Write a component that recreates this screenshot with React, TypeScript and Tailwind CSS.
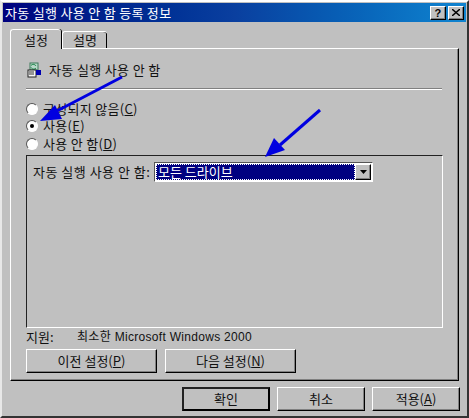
import type { ReactNode } from 'react'

const raised =
  'border border-t-white border-l-white border-r-black border-b-black shadow-[inset_-1px_-1px_0_#808080]'

function Accel({ children }: { children: ReactNode }) {
  return <span className="underline underline-offset-1">{children}</span>
}

function Radio({ checked, children }: { checked?: boolean; children: ReactNode }) {
  return (
    <div className="flex h-[17.5px] items-center gap-[5px]">
      <span className="flex h-[12px] w-[12px] items-center justify-center rounded-full border border-t-[#555] border-l-[#555] border-r-white border-b-white bg-white">
        {checked && <span className="h-[4px] w-[4px] rounded-full bg-black" />}
      </span>
      <span className="tracking-[0.3px]">{children}</span>
    </div>
  )
}

function PushButton({ width, children, strong }: { width: string; children: ReactNode; strong?: boolean }) {
  return (
    <button
      type="button"
      className={`flex h-[24px] items-center justify-center ${width} ${
        strong ? 'border-2 border-t-[#222] border-l-[#222] border-r-black border-b-black' : raised
      }`}
    >
      {children}
    </button>
  )
}

function PolicyIcon() {
  return (
    <svg width="16" height="16" viewBox="0 0 16 16" className="shrink-0">
      <rect x="4" y="1" width="8" height="7" fill="#b8d8c8" stroke="#3c7a5a" />
      <path d="M5 3.5c2-2 4-1 5 .5M10 6c-2 2-4 1-5-.5" fill="none" stroke="#0a7a3a" />
      <rect x="2" y="8" width="8" height="7" fill="#f4f4f4" stroke="#222" />
      <path d="M3 10h5M3 12h5" stroke="#333" />
      <rect x="10" y="8" width="5" height="5" fill="#0000b0" />
    </svg>
  )
}

export default function App() {
  return (
    <div className="relative flex h-[418px] w-[469px] flex-col overflow-hidden bg-[#c0c0c0] text-[13px] leading-[14px] text-[#111] [font-family:'Noto_Sans_CJK_KR','Liberation_Sans',sans-serif]">
      {/* window edge */}
      <div className="flex h-full flex-col border-2 border-t-white border-r-[#333] border-b-[#333] border-l-[#e8e8e8] p-[1px]">
        <div className="flex h-[19px] shrink-0 items-center justify-between bg-gradient-to-r from-[#00007e] via-[#0a3f9f] to-[#1084d0] pr-[2px] pl-[2px] tracking-[0.3px] text-white">
          <span>자동 실행 사용 안 함 등록 정보</span>
          <div className="flex gap-[2px]">
            <span className={`flex h-[14px] w-[16px] items-center justify-center bg-[#c0c0c0] text-[11px] font-bold text-black [font-family:'Liberation_Sans',sans-serif] ${raised}`}>
              ?
            </span>
            <span className={`flex h-[14px] w-[16px] items-center justify-center bg-[#c0c0c0] ${raised}`}>
              <svg width="8" height="7" viewBox="0 0 8 7">
                <path d="M0 0l8 7M8 0L0 7" stroke="#000" strokeWidth="1.4" />
              </svg>
            </span>
          </div>
        </div>

        {/* tabs */}
        <div className="ml-[7px] flex h-[26px] shrink-0 items-end">
          <div className="relative z-10 -mb-px flex h-[20px] w-[51px] items-center justify-center rounded-t-[3px] border-t border-l border-white bg-[#c0c0c0] shadow-[1px_0_0_#000]">
            설정
          </div>
          <div className="ml-[1px] flex h-[17px] w-[45px] items-center justify-center rounded-t-[3px] border-t border-l border-white shadow-[inset_-1px_0_0_#000]">
            설명
          </div>
        </div>

        {/* tab page */}
        <div className="ml-[7px] flex h-[333px] w-[449px] shrink-0 flex-col border border-t-white border-l-white border-r-black border-b-black px-[15px] shadow-[inset_-1px_-1px_0_#808080]">
          <div className="mt-[13px] flex items-center gap-[7px]">
            <PolicyIcon />
            <span className="tracking-[0.35px]">자동 실행 사용 안 함</span>
          </div>
          <div className="mt-[10px] h-[2px] w-[416px] shrink-0 border-t border-b border-t-[#808080] border-b-white" />

          <div className="mt-[10px] flex flex-col">
            <Radio>
              구성되지 않음(<Accel>C</Accel>)
            </Radio>
            <Radio checked>
              사용(<Accel>E</Accel>)
            </Radio>
            <Radio>
              사용 안 함(<Accel>D</Accel>)
            </Radio>
          </div>

          <div className="mt-[2.5px] flex h-[173px] w-[417px] shrink-0 items-start border border-t-[#222] border-l-[#222] border-r-white border-b-white pt-[6px] pl-[6px]">
            <span className="mt-[3px] w-[121px] tracking-[0.5px]">자동 실행 사용 안 함:</span>
            <div className="flex h-[20px] w-[219px] items-center border border-t-[#555] border-l-[#555] border-r-white border-b-white bg-white p-px">
              <span className="flex h-full flex-1 items-center bg-[#000080] pl-[2px] text-white outline-1 -outline-offset-1 outline-dotted outline-white">
                모든 드라이브
              </span>
              <span className={`flex h-full w-[16px] items-center justify-center bg-[#c0c0c0] ${raised}`}>
                <svg width="7" height="4" viewBox="0 0 7 4">
                  <path d="M0 0h7L3.5 4z" fill="#000" />
                </svg>
              </span>
            </div>
          </div>

          <div className="flex h-[17px] items-center">
            <span className="w-[51px]">지원:</span>
            <span className="text-[12px] tracking-[0.3px] [font-family:'Liberation_Sans','Noto_Sans_CJK_KR',sans-serif]">최소한 Microsoft Windows 2000</span>
          </div>
          <div className="mt-[4px] flex gap-[8px]">
            <PushButton width="w-[131px]">
              <span>
                이전 설정(<Accel>P</Accel>)
              </span>
            </PushButton>
            <PushButton width="w-[131px]">
              <span>
                다음 설정(<Accel>N</Accel>)
              </span>
            </PushButton>
          </div>
        </div>

        {/* dialog buttons */}
        <div className="mt-[6px] flex justify-end gap-[7px] pr-[6px]">
          <PushButton width="w-[88px]" strong>
            확인
          </PushButton>
          <PushButton width="w-[88px]">취소</PushButton>
          <PushButton width="w-[88px]">
            <span>
              적용(<Accel>A</Accel>)
            </span>
          </PushButton>
        </div>
      </div>

      {/* annotation arrows */}
      <svg width="469" height="418" className="pointer-events-none absolute top-0 left-0">
        <path d="M122 77 L55 112" stroke="#0000e0" strokeWidth="3" />
        <path d="M40 121 L55 105 L62 119 Z" fill="#0000e0" />
        <path d="M320 110 L280 145" stroke="#0000e0" strokeWidth="3" />
        <path d="M265 157 L274 138 L285 150 Z" fill="#0000e0" />
      </svg>
    </div>
  )
}
